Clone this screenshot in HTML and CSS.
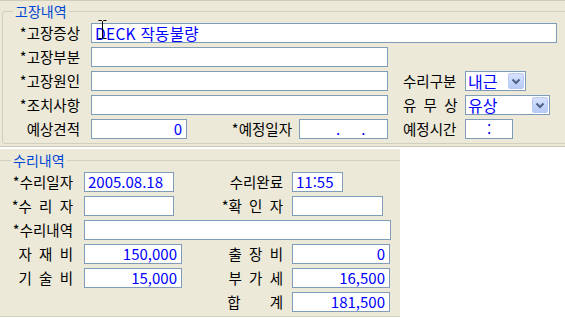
FILE: index.html
```html
<!DOCTYPE html>
<html lang="ko">
<head>
    <meta charset="UTF-8">
    <title>고장/수리내역</title>
    <link rel="stylesheet" href="styles.css">
</head>
<body>
<div class="panel panel-top">
    <fieldset class="group group-top">
        <legend>고장내역</legend>
        <div class="grid-top">
            <div class="lbl">*고장증상</div>
            <div class="box w-full wide">DECK 작동불량</div>

            <div class="lbl">*고장부분</div>
            <div class="box w-long"></div>

            <div class="lbl">*고장원인</div>
            <div class="box w-long"></div>
            <div class="lbl2">수리구분</div>
            <div class="select w-sel1">
                <span class="val">내근</span>
                <span class="btn"><svg width="14" height="14" viewBox="0 0 14 14"><path d="M3.5 5.5 L7 9 L10.5 5.5" fill="none" stroke="#4d6185" stroke-width="2"/></svg></span>
            </div>

            <div class="lbl">*조치사항</div>
            <div class="box w-long"></div>
            <div class="lbl2">유&ensp;무&ensp;상</div>
            <div class="select w-sel2">
                <span class="val">유상</span>
                <span class="btn"><svg width="14" height="14" viewBox="0 0 14 14"><path d="M3.5 5.5 L7 9 L10.5 5.5" fill="none" stroke="#4d6185" stroke-width="2"/></svg></span>
            </div>

            <div class="lbl">예상견적</div>
            <div class="box num">0</div>
            <div class="lbl mid">*예정일자</div>
            <div class="box date"><span>.</span><span>.</span></div>
            <div class="lbl2">예정시간</div>
            <div class="box time">:</div>
        </div>
    </fieldset>
    <svg class="cursor" width="9" height="19" viewBox="0 0 9 19">
        <path d="M0.5 0.5 H3.5 L4.5 1.5 L5.5 0.5 H8.5 M4.5 1.5 V17.5 M0.5 18.5 H3.5 L4.5 17.5 L5.5 18.5 H8.5" fill="none" stroke="#000" stroke-width="1"/>
    </svg>
</div>

<div class="panel panel-bottom">
    <fieldset class="group group-bottom">
        <legend>수리내역</legend>
        <div class="grid-bottom">
            <div class="lbl">*수리일자</div>
            <div class="box w-90">2005.08.18</div>
            <div class="lbl mid">수리완료</div>
            <div class="box w-51">11:55</div>

            <div class="lbl">*수&ensp;리&ensp;자</div>
            <div class="box w-90"></div>
            <div class="lbl mid">*확&ensp;인&ensp;자</div>
            <div class="box w-91"></div>

            <div class="lbl">*수리내역</div>
            <div class="box w-memo"></div>

            <div class="lbl">자&ensp;재&ensp;비</div>
            <div class="box num">150,000</div>
            <div class="lbl mid">출&ensp;장&ensp;비</div>
            <div class="box num">0</div>

            <div class="lbl">기&ensp;술&ensp;비</div>
            <div class="box num">15,000</div>
            <div class="lbl mid">부&ensp;가&ensp;세</div>
            <div class="box num">16,500</div>

            <div class="lbl mid sum">합&emsp;&emsp;계</div>
            <div class="box num">181,500</div>
        </div>
    </fieldset>
</div>
</body>
</html>
```

FILE: styles.css
```css
body {
  margin: 0;
  width: 565px;
  height: 318px;
  overflow: hidden;
  background-color: #fff;
  font-family: "Noto Sans CJK KR", "Noto Sans", sans-serif;
  font-size: 14.5px;
  color: #000;
}

.panel {
  background-color: #ece9d8;
  overflow: hidden;
  box-sizing: border-box;
}

.panel-top {
  position: relative;
  width: 565px;
  height: 147px;
  padding-top: 3px;
  border-top: 1px solid #d0ccbc;
  border-bottom: 1px solid #cbc7b6;
}

.panel-bottom {
  width: 400px;
  height: 168px;
  margin-top: 2px;
  padding-top: 4px;
}

.group {
  border: 1px solid #d0d0bf;
  border-radius: 3px;
  margin: 0;
  min-width: 0;
}

.group legend {
  color: #0046d5;
  font-size: 14px;
  line-height: 14px;
  padding: 0 2px;
}

.group-top {
  width: 640px;
  margin-left: 2px;
  padding: 5px 0 4px 0;
}

.group-top legend {
  margin-left: 10px;
}

.group-bottom {
  width: 460px;
  margin-left: -10px;
  padding: 5px 0 4px 9px;
}

.group-bottom legend {
  margin-left: 11px;
}

.grid-top {
  display: grid;
  grid-template-columns: 88px 96px 112px 89px 15px 62px 1fr;
  grid-auto-rows: 20px;
  row-gap: 4px;
}

.grid-bottom {
  display: grid;
  grid-template-columns: 84px 98px 110px 98px;
  grid-auto-rows: 20px;
  row-gap: 4px;
}

.lbl {
  grid-column: 1;
  text-align: right;
  padding-right: 11px;
  line-height: 20px;
  white-space: pre;
}

.grid-top .lbl.mid {
  grid-column: 3;
  padding-right: 7px;
}

.grid-bottom .lbl.mid {
  grid-column: 3;
  padding-right: 9px;
}

.lbl2 {
  grid-column: 6;
  line-height: 20px;
  white-space: pre;
}

.box {
  box-sizing: border-box;
  height: 20px;
  border: 1px solid #7f9db9;
  background-color: #fff;
  color: #0000ff;
  font-size: 15px;
  line-height: 18px;
  padding: 0 3px;
  white-space: pre;
}

.box.wide {
  font-size: 15.5px;
  letter-spacing: 0.3px;
}

.num {
  text-align: right;
  padding-right: 4px;
}

.w-full { grid-column: 2 / -1; width: 466px; }
.w-long { grid-column: 2 / 5; }
.w-90 { width: 90px; }
.w-91 { width: 91px; }
.w-51 { width: 51px; }
.w-memo { grid-column: 2 / 5; width: 307px; }

.sum {
  grid-column: 3;
}

.grid-bottom .sum + .box {
  grid-column: 4;
}

.date {
  display: flex;
  gap: 21px;
  padding-left: 36px;
}

.time {
  width: 48px;
  text-align: center;
}

.select {
  box-sizing: border-box;
  height: 20px;
  border: 1px solid #7f9db9;
  background-color: #fff;
  display: flex;
  align-items: center;
}

.w-sel1 { width: 61px; }
.w-sel2 { width: 85px; }

.select .val {
  flex: 1;
  color: #0000ff;
  font-size: 16px;
  line-height: 18px;
  padding-left: 2px;
}

.select .btn {
  box-sizing: border-box;
  width: 16px;
  height: 16px;
  margin-right: 1px;
  border: 1px solid #b9cbf3;
  border-radius: 2px;
  background: linear-gradient(#d6e2fd, #b7cbf7);
  display: flex;
  align-items: center;
  justify-content: center;
}

.cursor {
  position: absolute;
  left: 98px;
  top: 19px;
}
```
